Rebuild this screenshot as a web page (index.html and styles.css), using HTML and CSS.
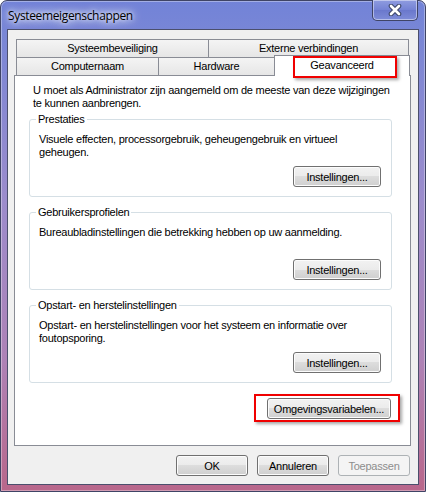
FILE: index.html
```html
<!DOCTYPE html>
<html lang="nl">
<head>
    <meta charset="UTF-8">
    <title>Systeemeigenschappen</title>
    <link rel="stylesheet" href="styles.css">
</head>
<body>
    <div class="window">
        <div class="titlebar">
            <span class="title">Systeemeigenschappen</span>
            <div class="close">
                <svg width="14" height="12" viewBox="0 0 14 12">
                    <path d="M3 2 L11 10 M11 2 L3 10" stroke="#3c4668" stroke-width="4.6" stroke-linecap="round"/>
                    <path d="M3 2 L11 10 M11 2 L3 10" stroke="#ffffff" stroke-width="2.6" stroke-linecap="round"/>
                </svg>
            </div>
        </div>

        <div class="client">
            <div class="tabs">
                <div class="tab-row">
                    <div class="tab tab-sys">Systeembeveiliging</div>
                    <div class="tab tab-ext">Externe verbindingen</div>
                </div>
                <div class="tab-row">
                    <div class="tab tab-comp">Computernaam</div>
                    <div class="tab tab-hw">Hardware</div>
                    <div class="tab tab-adv selected marked">Geavanceerd</div>
                </div>

                <div class="panel">
                    <p class="intro">U moet als Administrator zijn aangemeld om de meeste van deze wijzigingen<br>te kunnen aanbrengen.</p>

                    <!-- Prestaties -->
                    <div class="group">
                        <span class="group-title">Prestaties</span>
                        <p class="group-text">Visuele effecten, processorgebruik, geheugengebruik en virtueel<br>geheugen.</p>
                        <button class="btn btn-settings">Instellingen...</button>
                    </div>

                    <!-- Gebruikersprofielen -->
                    <div class="group">
                        <span class="group-title">Gebruikersprofielen</span>
                        <p class="group-text">Bureaubladinstellingen die betrekking hebben op uw aanmelding.</p>
                        <button class="btn btn-settings">Instellingen...</button>
                    </div>

                    <!-- Opstart -->
                    <div class="group">
                        <span class="group-title">Opstart- en herstelinstellingen</span>
                        <p class="group-text">Opstart- en herstelinstellingen voor het systeem en informatie over<br>foutopsporing.</p>
                        <button class="btn btn-settings">Instellingen...</button>
                    </div>

                    <button class="btn btn-env marked">Omgevingsvariabelen...</button>
                </div>
            </div>

            <div class="dialog-buttons">
                <button class="btn btn-dialog">OK</button>
                <button class="btn btn-dialog">Annuleren</button>
                <button class="btn btn-dialog" disabled>Toepassen</button>
            </div>
        </div>
    </div>
</body>
</html>
```

FILE: styles.css
```css
body {
    margin: 0;
    font-family: "Liberation Sans", Arial, sans-serif;
    font-size: 11px;
    letter-spacing: -0.24px;
    color: #000;
    background: #fff;
}

.window {
    width: 426px;
    height: 492px;
    box-sizing: border-box;
    border: 1px solid #3f4466;
    border-radius: 7px 7px 0 0;
    background: linear-gradient(to bottom, #7283d8 0, #7886d6 30px, #9c8ccc 200px, #ae82b6 360px, #b9668a 492px);
    box-shadow: inset 0 0 0 1px rgba(255, 255, 255, 0.35);
    display: flex;
    flex-direction: column;
}

.titlebar {
    height: 28px;
    display: flex;
    justify-content: space-between;
    align-items: flex-start;
}

.title {
    font-family: "Open Sans", "Liberation Sans", sans-serif;
    font-size: 12px;
    letter-spacing: -0.35px;
    line-height: 16px;
    margin: 7px 0 0 7px;
    color: #000;
    text-shadow: 0 0 8px #e8ecff, 0 0 12px #e8ecff, 0 0 4px #ffffff;
}

.close {
    width: 46px;
    height: 21px;
    box-sizing: border-box;
    margin: -1px 7px 0 0;
    border: 1px solid #3f4466;
    border-top: none;
    border-radius: 0 0 5px 5px;
    background: linear-gradient(to bottom, #8f9ce0, #7482d4 50%, #6a78cc 51%, #7e8cd8);
    box-shadow: inset 0 0 0 1px rgba(255, 255, 255, 0.45);
    display: flex;
    align-items: center;
    justify-content: center;
}

.client {
    flex: 1;
    margin: 0 6px 6px 6px;
    border: 1px solid #4b4f6c;
    background: #f0f0f0;
    padding: 9px 7px 0 6px;
    display: flex;
    flex-direction: column;
}

/* Tabbladen */
.tab-row {
    display: flex;
    height: 18px;
    padding: 0 2px;
}

.tab {
    flex-shrink: 0;
    box-sizing: border-box;
    height: 18px;
    border: 1px solid #898c95;
    border-bottom: none;
    background: linear-gradient(to bottom, #f4f4f4, #e6e6e6);
    text-align: center;
    line-height: 17px;
    white-space: nowrap;
}

.tab + .tab {
    margin-left: -1px;
}

.tab-sys { width: 193px; }
.tab-ext { width: 201px; }
.tab-comp { width: 143px; }
.tab-hw { width: 117px; }
.tab-adv { width: 136px; }

.tab.selected {
    position: relative;
    z-index: 1;
    height: 21px;
    margin-top: -2px;
    background: #fff;
    line-height: 19px;
}

.panel {
    height: 371px;
    box-sizing: border-box;
    border: 1px solid #898c95;
    background: #fff;
    padding: 8px 18px 0 14px;
    display: flex;
    flex-direction: column;
}

.intro {
    margin: 0 0 0 4px;
    line-height: 13px;
    white-space: nowrap;
}

/* Groepsvakken */
.group {
    margin-top: 9px;
    border: 1px solid #d5dfe5;
    border-radius: 3px;
    padding: 0 10px 9px 9px;
    display: flex;
    flex-direction: column;
}

.group + .group {
    margin-top: 15px;
}

.group-title {
    align-self: flex-start;
    margin: -7px 0 0 -3px;
    padding: 0 2px;
    background: #fff;
    line-height: 13px;
}

.group-text {
    margin: 7px 0 0 0;
    min-height: 26px;
    line-height: 13px;
    white-space: nowrap;
}

/* Knoppen */
.btn {
    font-family: inherit;
    font-size: 11px;
    letter-spacing: inherit;
    color: #000;
    box-sizing: border-box;
    height: 21px;
    padding: 0;
    border: 1px solid #707070;
    border-radius: 3px;
    background: linear-gradient(to bottom, #f2f2f2 0%, #ebebeb 50%, #dddddd 50%, #cfcfcf 100%);
    box-shadow: inset 0 0 0 1px #fcfcfc;
}

.btn:disabled {
    color: #8d8d8d;
    border-color: #adb2b5;
    background: #f4f4f4;
    box-shadow: none;
}

.btn-settings {
    align-self: flex-end;
    width: 88px;
    margin-top: 7px;
}

.btn-env {
    align-self: flex-end;
    width: 124px;
    margin: 15px 1px 0 0;
}

.dialog-buttons {
    display: flex;
    justify-content: flex-end;
    gap: 9px;
    margin-top: 9px;
    padding-right: 1px;
}

.btn-dialog {
    width: 72px;
}

/* Rode markeringen */
.marked {
    position: relative;
}

.marked::after {
    content: "";
    position: absolute;
    border: 2px solid #f00000;
    box-shadow: 2px 2px 3px rgba(0, 0, 0, 0.35);
    pointer-events: none;
}

.tab-adv.marked::after {
    left: 18px;
    top: 0;
    width: 100px;
    height: 18px;
}

.btn-env.marked::after {
    left: -14px;
    top: -5px;
    width: 142px;
    height: 24px;
}
```
